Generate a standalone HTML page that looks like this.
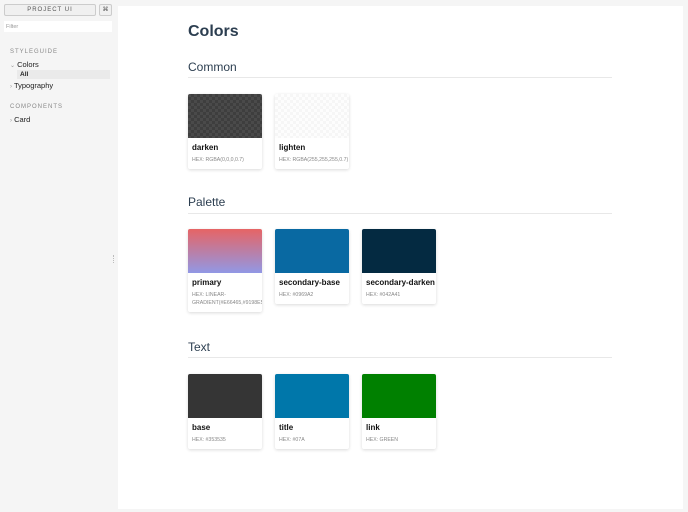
<!DOCTYPE html>
<html><head><style>
*{margin:0;padding:0;box-sizing:border-box}
body{width:688px;height:512px;background:#f5f5f5;font-family:"Liberation Sans",Arial,sans-serif;position:relative;overflow:hidden}
.a{position:absolute}
.panel{left:118px;top:6px;width:565px;height:503px;background:#fff}
.btn{top:4px;height:12px;border:1px solid #ccc;background:#f0f0f0;border-radius:2px;font-size:6px;letter-spacing:1px;color:#555;text-align:center;line-height:10px}
.sec{font-size:6px;letter-spacing:1px;color:#888}
.nav{font-size:7.5px;color:#222}
.h2{font-size:12px;color:#2c3e50;left:188px}
.rule{left:188px;width:424px;height:1px;background:#e8e8e8}
.card{width:74px;background:#fff;box-shadow:0 1px 3px rgba(0,0,0,.15);border-radius:2px}
.sw{height:44px;border-radius:2px 2px 0 0}
.nm{font-size:8px;font-weight:bold;color:#111;padding:5px 0 0 4px;height:15px}
.hx{font-size:5.2px;color:#888;padding:3px 3px 5px 4px;line-height:8px;white-space:nowrap;overflow:hidden}
.wrap{white-space:normal}
</style></head><body>
<div class="a btn" style="left:4px;width:92px">PROJECT UI</div>
<div class="a btn" style="left:99px;width:13px;letter-spacing:0">⌘</div>
<div class="a" style="left:4px;top:21px;width:108px;height:11px;background:#fff;font-size:5.5px;color:#999;padding:3px 2px">Filter</div>
<div class="a sec" style="left:10px;top:49px">STYLEGUIDE</div>
<div class="a nav" style="left:10px;top:60px"><span style="color:#999;font-size:6px">⌄</span> Colors</div>
<div class="a" style="left:17px;top:70px;width:93px;height:9px;background:#eaeaea"></div>
<div class="a nav" style="left:20px;top:71px;font-size:6.5px;font-weight:bold">All</div>
<div class="a nav" style="left:10px;top:81px"><span style="color:#999;font-size:6px">›</span> Typography</div>
<div class="a sec" style="left:10px;top:104px">COMPONENTS</div>
<div class="a nav" style="left:10px;top:115px"><span style="color:#999;font-size:6px">›</span> Card</div>
<div class="a" style="left:113px;top:255px;width:2px;height:8px;border-left:1px dotted #bbb"></div>
<div class="a panel"></div>
<div class="a" style="left:188px;top:23px;font-size:16px;font-weight:bold;color:#2c3e50">Colors</div>
<div class="a h2" style="top:60px">Common</div><div class="a rule" style="top:77px"></div>
<div class="a card" style="left:188px;top:94px"><div class="sw" style="background:#444;background-image:repeating-conic-gradient(#3e3e3e 0 25%,#4a4a4a 0 50%);background-size:6px 6px"></div><div class="nm">darken</div><div class="hx">HEX: RGBA(0,0,0,0.7)</div></div>
<div class="a card" style="left:275px;top:94px"><div class="sw" style="background-image:repeating-conic-gradient(#f6f6f6 0 25%,#fdfdfd 0 50%);background-size:6px 6px"></div><div class="nm">lighten</div><div class="hx">HEX: RGBA(255,255,255,0.7)</div></div>
<div class="a h2" style="top:195px">Palette</div><div class="a rule" style="top:213px"></div>
<div class="a card" style="left:188px;top:229px"><div class="sw" style="background:linear-gradient(#e66465,#9198e5)"></div><div class="nm">primary</div><div class="hx wrap">HEX: LINEAR-GRADIENT(#E66465,#9198E5)</div></div>
<div class="a card" style="left:275px;top:229px"><div class="sw" style="background:#0969a2"></div><div class="nm">secondary-base</div><div class="hx">HEX: #0969A2</div></div>
<div class="a card" style="left:362px;top:229px"><div class="sw" style="background:#042a41"></div><div class="nm">secondary-darken</div><div class="hx">HEX: #042A41</div></div>
<div class="a h2" style="top:340px">Text</div><div class="a rule" style="top:357px"></div>
<div class="a card" style="left:188px;top:374px"><div class="sw" style="background:#353535"></div><div class="nm">base</div><div class="hx">HEX: #353535</div></div>
<div class="a card" style="left:275px;top:374px"><div class="sw" style="background:#0077aa"></div><div class="nm">title</div><div class="hx">HEX: #07A</div></div>
<div class="a card" style="left:362px;top:374px"><div class="sw" style="background:#008000"></div><div class="nm">link</div><div class="hx">HEX: GREEN</div></div>
</body></html>
